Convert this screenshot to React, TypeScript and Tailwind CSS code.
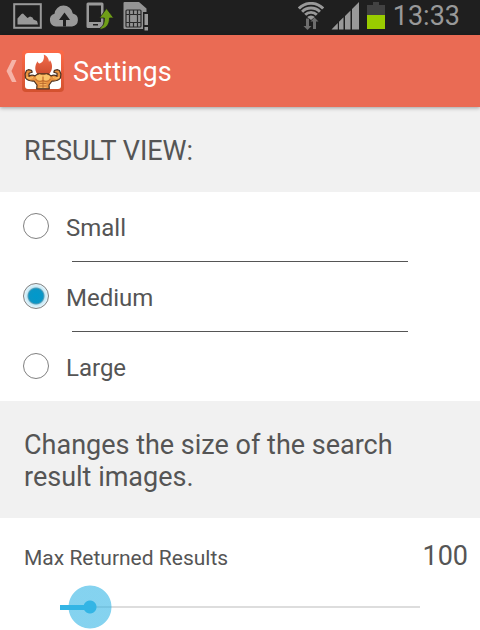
import { useState } from "react";

type Size = "Small" | "Medium" | "Large";

const SIZES: Size[] = ["Small", "Medium", "Large"];
const MAX_RESULTS = 1200;

function PictureIcon() {
  return (
    <svg viewBox="0 0 29 26" className="h-[26px] w-[29px]" aria-hidden="true">
      <rect x="1.2" y="1.2" width="26.6" height="23.6" fill="none" stroke="#999" strokeWidth="2" />
      <path d="M4.500 21.500v-6L8.500 11l1.500-.5 4.500 4.500 2.500-1.500 2.500 1 1 2 3.500 1.500 1 3.500z" fill="#999" />
    </svg>
  );
}

function CloudUploadIcon() {
  return (
    <svg viewBox="0 0 30 22" className="h-[22px] w-[30px]" aria-hidden="true">
      <path
        d="M7 21.500a6.500 6.500 0 0 1-1.500-12.700A9 9 0 0 1 14.500 0.500a9.500 9.500 0 0 1 9.300 8A6.600 6.600 0 0 1 23 21.500z"
        fill="#999"
      />
      <path d="M15.500 7.500l5.500 7.500h-4v6.500h-3V15h-4z" fill="#1f1f1f" />
    </svg>
  );
}

function PhoneTransferIcon() {
  return (
    <svg viewBox="0 0 28 28" className="h-7 w-7" aria-hidden="true">
      <path d="M2 .5h14A1.500 1.500 0 0 1 17.500 2v24H2A1.500 1.500 0 0 1 .5 24.500V2A1.500 1.500 0 0 1 2 .5z" fill="#999" />
      <path d="M3 3.500h12V20H3z" fill="#1f1f1f" />
      <rect x="7" y="22" width="5" height="1.500" fill="#1f1f1f" />
      <path d="M20.500 6.500l7.200 9.500h-4.200c0 6.500-3 10.500-9.500 11.500v-1.500c3.500-2 4.500-5.500 4.300-10H13.500z" fill="#6f9e17" stroke="#1f1f1f" strokeWidth=".8" />
    </svg>
  );
}

function SimCardIcon() {
  return (
    <svg viewBox="0 0 26 30" className="h-[30px] w-[26px]" aria-hidden="true">
      <path d="M1.500 1H16l7.500 6.500V11H20v17H1.500a1 1 0 0 1-1-1V2a1 1 0 0 1 1-1z" fill="#949494" />
      <g fill="none" stroke="#2a2a2a" strokeWidth="1.200">
        <rect x="3" y="9" width="15" height="17" rx="1" />
        <path d="M6.500 9v4.500M10.500 9v4.500M14.500 9v4.500M6.500 21.500V26M10.500 21.500V26M14.500 21.500V26M3 13.500h3.500M3 21.500h3.500M14.500 13.500H18M14.500 21.500H18" />
        <rect x="6.500" y="13.500" width="8" height="8" rx="1" />
      </g>
      <path d="M21.500 13H25v11h-3.500zM21.500 26H25v3.500h-3.500z" fill="#999" />
    </svg>
  );
}

function WifiIcon() {
  return (
    <svg viewBox="0 0 26 28" className="h-7 w-[26px]" aria-hidden="true">
      <g fill="none" stroke="#999" strokeWidth="2.900">
        <path d="M.9 6.500a16.800 16.800 0 0 1 24.200 0" />
        <path d="M4.100 9.700a12.500 12.500 0 0 1 17.800 0" />
        <path d="M7.200 12.800a8.200 8.200 0 0 1 11.600 0" />
      </g>
      <path d="M9.200 15a5.300 5.300 0 0 1 7.600 0L13 18z" fill="#999" />
      <g fill="#6e6e6e">
        <path d="M8 16.500h3V24h2.500l-4 4-4-4H8z" />
        <path d="M15 27v-7.500h-2.500l4-4 4 4H18V27z" />
      </g>
    </svg>
  );
}

function SignalIcon() {
  return (
    <svg viewBox="0 0 29 28" className="h-7 w-[29px]" aria-hidden="true">
      <path d="M.5 27.500L6.800 21v6.500zM8 27.500v-7.700l4.500-4.500v12.200zM14 27.500V14l5.500-5.500v19zM21 27.500V7L28 0v27.500z" fill="#999" />
    </svg>
  );
}

function BatteryIcon() {
  return (
    <svg viewBox="0 0 18 28" className="h-7 w-[18px]" aria-hidden="true">
      <path d="M6 0h6v3h6v24H0V3h6z" fill="#424242" />
      <rect y="13" width="18" height="14" fill="#99cc00" />
    </svg>
  );
}

function AppLogo() {
  return (
    <svg viewBox="0 0 42 42" className="h-[42px] w-[42px]" aria-hidden="true">
      <defs>
        <linearGradient id="frame" x1="0" y1="0" x2="0" y2="1">
          <stop offset="0" stopColor="#fd6a48" />
          <stop offset="1" stopColor="#d3512f" />
        </linearGradient>
        <linearGradient id="flame" x1="0" y1="0" x2="0" y2="1">
          <stop offset="0" stopColor="#f26d4c" />
          <stop offset="1" stopColor="#cd4b2d" />
        </linearGradient>
      </defs>
      <rect width="42" height="42" rx="4" fill="url(#frame)" />
      <rect x="3" y="3" width="36" height="36" rx="3" fill="#fff" />
      <path
        d="M21.800 4.500c4.200 1.800 5 5 5.200 7.500.5-.6.800-1.300.9-2 3.600 5 2.600 11.500-2 15.500h-9c-5-4-4.300-10.500-1.200-14.300.2 1.300.8 2.100 1.900 2.300 3.500-1 4.900-4.500 4.200-9z"
        fill="url(#flame)"
      />
      {/* Arms and torso */}
      <path
        d="M4.500 20.500l2-.8 3 .6.700 2-3.200 1v3c2-1.500 4.200-1.500 6-.2l3-2.300h10l3 2.300c1.800-1.300 4-1.300 6 .2v-3l-3.200-1 .7-2 3-.6 2 .8 1.400 3.500-.4 4c-2.200 2.800-5.500 3.200-8.500 3l-3 4 .3 3.800H14.700L15 35l-3-4c-3 .2-6.300-.2-8.500-3l-.4-4z"
        fill="#e8923f"
        stroke="#4a3020"
        strokeWidth="1.200"
        strokeLinejoin="round"
      />
      <path d="M13.500 26.500c2-1.800 5.500-1.800 7-.5v4c-2.500 1.500-6 .5-7-3.500zM28.500 26.500c-2-1.800-5.500-1.800-7-.5v4c2.500 1.500 6 .5 7-3.500z" fill="#fbc46b" />
      <path d="M17.500 32.500h7v5.500h-7z" fill="#f7b25c" />
      <path d="M5 27c1.500 1.500 3.500 1.500 6 .5M37 27c-1.500 1.500-3.500 1.500-6 .5M17 24.800l4 1.200 4-1.200" fill="none" stroke="#fbc46b" strokeWidth="1.300" />
      <path
        d="M13.500 29c1.500 2.500 5 3 7.500 1.500 2.500 1.500 6 1 7.500-1.500M21 26.500V38M17.500 33.500h7M17.500 36h7"
        fill="none"
        stroke="#b4632a"
        strokeWidth=".8"
      />
    </svg>
  );
}

function StatusBar() {
  return (
    <div className="flex h-[35px] items-center justify-between bg-[#1f1f1f] pr-5 pb-[3px] pl-[13px]">
      <div className="flex items-center gap-[7px]">
        <PictureIcon />
        <CloudUploadIcon />
        <PhoneTransferIcon />
        <span className="pl-0.5">
          <SimCardIcon />
        </span>
      </div>
      <div className="flex items-center gap-[7px]">
        <WifiIcon />
        <SignalIcon />
        <BatteryIcon />
        <time className="pl-px text-[27px] leading-8 text-[#999999]">13:33</time>
      </div>
    </div>
  );
}

export default function App() {
  const [size, setSize] = useState<Size>("Medium");
  const [results, setResults] = useState(100);

  return (
    <div className="min-h-screen bg-white font-[Roboto,sans-serif] text-[#555555]">
      <StatusBar />

      {/* Action bar */}
      <header className="relative flex h-[72px] items-center bg-[#ea6b54] pl-1.5 shadow-[0_1px_4px_rgba(0,0,0,0.35)]">
        <button type="button" aria-label="Back" className="flex items-center gap-1">
          <svg viewBox="0 0 12 22" className="h-[22px] w-3" aria-hidden="true">
            <path d="M6 0h4.500L5.500 11l5 11H6L.5 11z" fill="#f6b3a7" />
          </svg>
          <AppLogo />
        </button>
        <h1 className="ml-[9px] pt-0.5 text-[27px] leading-8 text-white">Settings</h1>
      </header>

      <main>
        <h2 id="result-view" className="bg-[#f1f1f1] px-6 pt-7 pb-[25px] text-[27px] leading-8">
          RESULT VIEW:
        </h2>

        <div role="radiogroup" aria-labelledby="result-view">
          {SIZES.map((s, i) => (
            <div key={s}>
              <label className="flex h-[69px] items-center gap-[17px] pb-0.5 pl-[23px] text-[24px] leading-8">
                <input
                  type="radio"
                  name="size"
                  value={s}
                  checked={size === s}
                  onChange={() => setSize(s)}
                  className="h-[26px] w-[26px] appearance-none rounded-full border border-[#808080] bg-white checked:bg-[radial-gradient(circle,#0099cc_0,#0a96c6_7px,#5a9fb8_8px,#c5e8f5_9px,#e8f6fc_12px)]"
                />
                <span className="pt-1">{s}</span>
              </label>
              {i < SIZES.length - 1 && <hr className="mx-[72px] border-t border-[#555555]" />}
            </div>
          ))}
        </div>

        <p className="bg-[#f1f1f1] px-6 pt-7 pb-[25px] text-[27px] leading-8">
          Changes the size of the search result images.
        </p>

        <section className="pt-5">
          <div className="flex items-center justify-between pr-3 pl-6">
            <label htmlFor="max-results" className="pt-1 text-[21px] leading-8">
              Max Returned Results
            </label>
            <output htmlFor="max-results" className="text-[27px] leading-8">
              {results}
            </output>
          </div>

          {/* Slider */}
          <div className="relative mx-[60px] mt-[11px] flex h-11 items-center">
            <div className="h-0.5 w-full bg-[#dddddd]" />
            <div
              className="absolute left-0 h-[5px] bg-[#33b5e5]"
              style={{ width: `${(results / MAX_RESULTS) * 100}%` }}
            />
            <input
              id="max-results"
              type="range"
              min={0}
              max={MAX_RESULTS}
              step={10}
              value={results}
              onChange={(e) => setResults(Number(e.target.value))}
              className="absolute -inset-x-[22px] h-11 appearance-none bg-transparent [&::-webkit-slider-thumb]:h-11 [&::-webkit-slider-thumb]:w-11 [&::-webkit-slider-thumb]:appearance-none [&::-webkit-slider-thumb]:rounded-full [&::-webkit-slider-thumb]:bg-[radial-gradient(circle,#33b5e5_6px,rgba(51,181,229,0.6)_7px,rgba(51,181,229,0.6)_21px,transparent_22px)]"
            />
          </div>
        </section>
      </main>
    </div>
  );
}
